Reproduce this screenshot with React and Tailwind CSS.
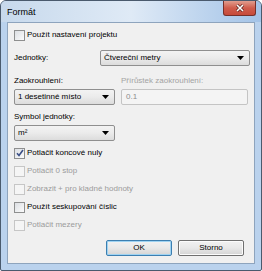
import React from 'react';

const font = { fontFamily: '"Liberation Sans", Arial, sans-serif' };

function Arrow() {
  return (
    <svg width="7" height="4" viewBox="0 0 7 4" className="shrink-0">
      <path d="M0 0h7L3.5 4z" fill="#000" />
    </svg>
  );
}

function Combo({ text, className = '' }) {
  return (
    <div
      className={`flex h-[16px] items-center justify-between rounded-[2px] border border-[#8f8f8f] bg-gradient-to-b from-[#f3f3f3] via-[#ebebeb] to-[#dcdcdc] pl-[3px] pr-[5px] text-[8px] text-black ${className}`}
    >
      <span>{text}</span>
      <Arrow />
    </div>
  );
}

function Check({ label, checked = false, disabled = false }) {
  return (
    <div className="flex h-[18px] items-center gap-[2px]">
      <div
        className={`flex h-[11px] w-[11px] items-center justify-center border ${
          disabled
            ? 'border-[#c6c6c6] bg-[#f5f5f5]'
            : 'border-[#8e8f8f] bg-gradient-to-br from-[#dcdfe3] to-[#fbfbfb]'
        }`}
      >
        {checked && (
          <svg width="8" height="8" viewBox="0 0 8 8">
            <path d="M1 4.2l2 2.3L7 1" fill="none" stroke="#3b4f86" strokeWidth="1.6" />
          </svg>
        )}
      </div>
      <span className={`text-[8px] ${disabled ? 'text-[#9b9b9b]' : 'text-black'}`}>{label}</span>
    </div>
  );
}

function Button({ children, primary = false }) {
  return (
    <div
      className={`flex h-[16px] w-[66px] items-center justify-center rounded-[2px] border bg-gradient-to-b from-[#f2f2f2] via-[#e8e8e8] to-[#d4d4d4] text-[8px] text-black ${
        primary ? 'border-[#3c7fb1] shadow-[inset_0_0_0_1px_#9fd3f2]' : 'border-[#707070] shadow-[inset_0_0_0_1px_#fcfcfc]'
      }`}
    >
      {children}
    </div>
  );
}

export default function App() {
  return (
    <div className="h-[271px] w-[262px] bg-white" style={font}>
      <div className="flex h-full flex-col overflow-hidden rounded-t-[6px] rounded-b-[2px] border border-[#4a5a6d] bg-[#bad2ed]">
        {/* Title bar */}
        <div className="flex h-[21px] items-start justify-between bg-gradient-to-r from-[#c7d9ec] via-[#dfeaf6] to-[#a3c3e7] pr-[5px]">
          <span className="mt-[5px] pl-[6px] text-[9px] text-black">Formát</span>
          <div className="flex h-[15px] w-[33px] items-center justify-center rounded-b-[3px] border border-t-0 border-[#76302a] bg-gradient-to-b from-[#e09d8f] via-[#cf5c4c] to-[#c64a3a]">
            <svg width="10" height="8" viewBox="0 0 10 8">
              <path d="M2 1l6 6M8 1l-6 6" stroke="#5b2520" strokeWidth="3" />
              <path d="M2 1l6 6M8 1l-6 6" stroke="#fff" strokeWidth="1.6" />
            </svg>
          </div>
        </div>

        {/* Client area */}
        <div className="mx-[6px] mb-[6px] flex flex-1 flex-col border border-[#8ea4bd] bg-[#f0f0f0] pl-[6px] pr-[4px]">
          <div className="mt-[3px]">
            <Check label="Použít nastavení projektu" />
          </div>

          <div className="mt-[6px] flex h-[16px] items-center">
            <span className="w-[86px] text-[8px] text-black">Jednotky:</span>
            <Combo text="Čtvereční metry" className="flex-1" />
          </div>

          <div className="mt-[8px] flex h-[14px] items-center gap-[6px] text-[8px]">
            <span className="w-[101px] text-black">Zaokrouhlení:</span>
            <span className="text-[#a3a3a3]">Přírůstek zaokrouhlení:</span>
          </div>
          <div className="mt-[1px] flex h-[16px] gap-[6px]">
            <Combo text="1 desetinné místo" className="w-[101px]" />
            <div className="mr-[2px] flex h-[16px] flex-1 items-center rounded-[2px] border border-[#c4c4c4] bg-[#f4f4f4] pl-[4px] text-[8px] text-[#8d8d8d]">
              0.1
            </div>
          </div>

          <div className="mt-[5px] flex h-[14px] items-center text-[8px] text-black">Symbol jednotky:</div>
          <div className="mt-[1px]">
            <Combo text="m²" className="w-[101px]" />
          </div>

          <div className="mt-[3px] flex flex-col">
            <Check label="Potlačit koncové nuly" checked />
            <Check label="Potlačit 0 stop" disabled />
            <Check label="Zobrazit + pro kladné hodnoty" disabled />
            <Check label="Použít seskupování číslic" />
            <Check label="Potlačit mezery" disabled />
          </div>

          <div className="mr-[6px] mt-[6px] flex justify-end gap-[6px]">
            <Button primary>OK</Button>
            <Button>Storno</Button>
          </div>
        </div>
      </div>
    </div>
  );
}
